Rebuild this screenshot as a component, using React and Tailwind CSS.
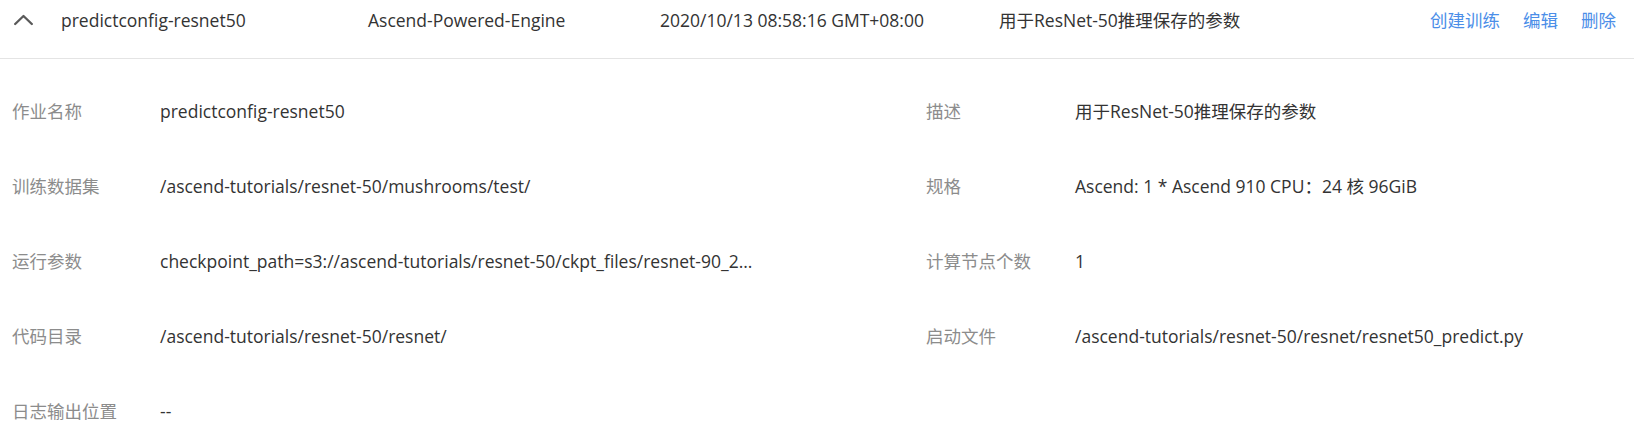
import React from "react";

const rows = [
  [["作业名称", "predictconfig-resnet50"], ["描述", "用于ResNet-50推理保存的参数"]],
  [["训练数据集", "/ascend-tutorials/resnet-50/mushrooms/test/"], ["规格", "Ascend: 1 * Ascend 910 CPU：24 核 96GiB"]],
  [["运行参数", "checkpoint_path=s3://ascend-tutorials/resnet-50/ckpt_files/resnet-90_2..."], ["计算节点个数", "1"]],
  [["代码目录", "/ascend-tutorials/resnet-50/resnet/"], ["启动文件", "/ascend-tutorials/resnet-50/resnet/resnet50_predict.py"]],
  [["日志输出位置", "--"], null],
];

export default function App() {
  return (
    <div className="w-[1634px] h-[440px] overflow-hidden bg-white font-['Open_Sans','Noto_Sans_CJK_SC',sans-serif] text-[17.5px] leading-[24px] text-[#333]">
      <div className="grid grid-cols-[61px_307px_292px_339px_1fr_auto] items-start h-[59px] pt-[8px] border-b border-[#e4e4e4]">
        <div className="pl-[14px] pt-[3px]">
          <svg width="19" height="16" viewBox="0 0 19 16" fill="none">
            <polyline points="1.2,13 9.5,5 17.8,13" stroke="#5a5a5a" strokeWidth="2.3" strokeLinecap="round" strokeLinejoin="round" />
          </svg>
        </div>
        <div>predictconfig-resnet50</div>
        <div>Ascend-Powered-Engine</div>
        <div>2020/10/13 08:58:16 GMT+08:00</div>
        <div>用于ResNet-50推理保存的参数</div>
        <div className="flex gap-[23px] pr-[18px] text-[#4b8ee8]">
          <span>创建训练</span>
          <span>编辑</span>
          <span>删除</span>
        </div>
      </div>
      <div className="flex flex-col gap-[51px] pt-[40px] px-[12px]">
        {rows.map((row, i) => (
          <div key={i} className="grid grid-cols-[148px_766px_149px_1fr]">
            <div className="text-[#8c8c8c]">{row[0][0]}</div>
            <div>{row[0][1]}</div>
            {row[1] ? (
              <>
                <div className="text-[#8c8c8c]">{row[1][0]}</div>
                <div>{row[1][1]}</div>
              </>
            ) : null}
          </div>
        ))}
      </div>
    </div>
  );
}
